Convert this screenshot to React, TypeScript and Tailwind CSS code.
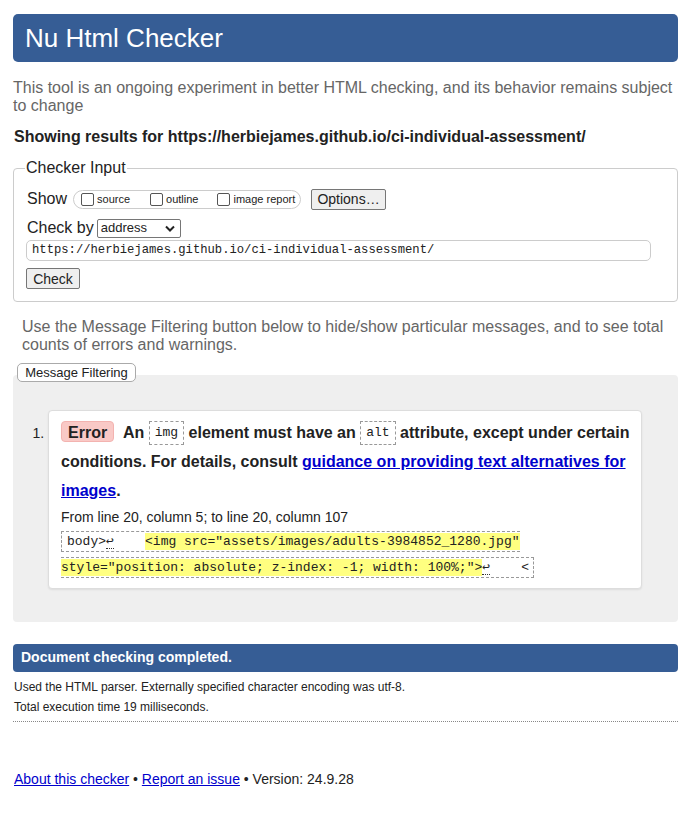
import React from "react";

const mono = "font-['Liberation_Mono','DejaVu_Sans_Mono',monospace]";

function Code({ children }: { children: React.ReactNode }) {
  return (
    <code
      className={`${mono} inline-block align-middle text-[13px] leading-[22px] px-[5px] border border-dashed border-[#999] font-normal text-[#222]`}
    >
      {children}
    </code>
  );
}

function Ret() {
  return <b className="font-normal border-b border-dotted border-[#333] font-['DejaVu_Sans_Mono',monospace] text-[13px]">↩</b>;
}

export default function App() {
  return (
    <div className="min-h-screen bg-white px-[13px] pt-[14px] font-['Liberation_Sans',Arial,sans-serif] text-[#222]">
      {/* Header */}
      <h1 className="h-[48px] rounded-[5px] bg-[#365d95] pl-[12px] flex items-center text-white text-[26px] font-normal">
        Nu Html Checker
      </h1>

      <p className="mt-[17px] text-[16px] leading-[18px] text-[#666]">
        This tool is an ongoing experiment in better HTML checking, and its behavior remains subject to change
      </p>

      <p className="mt-[13px] text-[16px] leading-[18px] font-bold pl-px">
        Showing results for https://herbiejames.github.io/ci-individual-assessment/
      </p>

      {/* Checker input */}
      <fieldset className="mt-[13px] border border-[#ccc] rounded-[4px] px-[12px] pb-[10px] pt-[2px]">
        <legend className="px-[1px] text-[16px] leading-[18px] text-[#222] -ml-[1px]">Checker Input</legend>

        <div className="flex items-center h-[22px] mt-[9px]">
          <span className="text-[16px] mr-[6px] ml-[1px]">Show</span>
          <span className="flex items-center h-[19px] w-[228px] border border-[#ccc] rounded-full pl-[7px] text-[11px]">
            <span className="w-[13px] h-[13px] border border-[#555] rounded-[2px] mr-[3px]" />
            <span>source</span>
            <span className="w-[13px] h-[13px] border border-[#555] rounded-[2px] ml-[20px] mr-[3px]" />
            <span>outline</span>
            <span className="w-[13px] h-[13px] border border-[#555] rounded-[2px] ml-[19px] mr-[3px]" />
            <span>image report</span>
          </span>
          <button className="ml-[10px] h-[21px] w-[75px] border border-[#767676] rounded-[2px] bg-[#efefef] text-[14px] leading-none">
            Options…
          </button>
        </div>

        <div className="flex items-center h-[22px] mt-[7px]">
          <span className="text-[16px] mr-[3px] ml-[1px]">Check by</span>
          <span className="flex items-center justify-between h-[19px] w-[84px] border border-[#767676] rounded-[2px] pl-[3px] pr-[5px] text-[13px]">
            <span>address</span>
            <svg width="10" height="7" viewBox="0 0 10 7">
              <path d="M1 1.5 L5 5.5 L9 1.5" fill="none" stroke="#222" strokeWidth="2" />
            </svg>
          </span>
        </div>

        <div className={`mt-[1px] h-[21px] w-[625px] border border-[#ccc] rounded-[5px] flex items-center pl-[5px] ${mono} text-[12.2px]`}>
          https://herbiejames.github.io/ci-individual-assessment/
        </div>

        <button className="mt-[7px] h-[21px] w-[54px] border border-[#767676] rounded-[2px] bg-[#efefef] text-[14px] leading-none">
          Check
        </button>
      </fieldset>

      <p className="mt-[16px] pl-[9px] text-[16px] leading-[18px] text-[#666]">
        Use the Message Filtering button below to hide/show particular messages, and to see total counts of errors and warnings.
      </p>

      {/* Results */}
      <div className="relative mt-[9px] pt-[12px]">
        <button className="absolute left-[4px] top-0 z-10 h-[19px] w-[119px] border border-[#aaa] rounded-[5px] bg-white text-[13px] leading-none">
          Message Filtering
        </button>
        <div className="rounded-[4px] bg-[#efefef] pl-[35px] pr-[36px] pt-[35px] pb-[33px]">
          <ol className="list-decimal list-outside marker:text-[14px] marker:font-normal marker:text-[#222]">
            <li className="bg-white border border-[#ddd] rounded-[4px] shadow-[0_1px_2px_rgba(0,0,0,0.08)] pl-[12px] pr-[4px] pt-[7px] pb-[8px]">
              <p className="text-[16px] leading-[29px] font-bold">
                <span className="inline-block align-middle leading-[21px] h-[21px] rounded-[4px] bg-[#f9c9c6] border border-[#f3b3b0] px-[6px] mr-[5px] -mt-[3px]">
                  Error
                </span>{" "}
                An <Code>img</Code> element must have an <Code>alt</Code> attribute, except under certain conditions. For
                details, consult{" "}
                <a href="#" className="text-[#0000cc] underline">
                  guidance on providing text alternatives for images
                </a>
                .
              </p>
              <p className="mt-[3px] text-[14px] leading-[18px]">From line 20, column 5; to line 20, column 107</p>
              <p className={`${mono} text-[13px] leading-[25px] mt-[2px] whitespace-pre`}>
                <span className="border border-dashed border-[#999] py-[2px] pl-[5px] pr-[4px]">
                  body&gt;<Ret />{"    "}
                  <span className="bg-[#ffff80] py-[1px]">&lt;img src="assets/images/adults-3984852_1280.jpg"</span>
                  <br />
                  <span className="bg-[#ffff80] py-[1px]">style="position: absolute; z-index: -1; width: 100%;"&gt;</span>
                  <Ret />
                  {"    "}&lt;
                </span>
              </p>
            </li>
          </ol>
        </div>
      </div>

      {/* Summary */}
      <div className="mt-[22px] h-[28px] rounded-[4px] bg-[#365d95] flex items-center pl-[8px] text-white text-[14px] font-bold">
        Document checking completed.
      </div>
      <p className="mt-[5px] pl-px text-[12px] leading-[20px] text-[#222]">
        Used the HTML parser. Externally specified character encoding was utf-8.
      </p>
      <p className="pl-px text-[12px] leading-[20px] text-[#222]">Total execution time 19 milliseconds.</p>
      <hr className="mt-[4px] border-0 border-t border-dotted border-[#888]" />

      <p className="mt-[48px] pl-px text-[14px] leading-[18px] text-[#222]">
        <a href="#" className="text-[#0000cc] underline">About this checker</a> •{" "}
        <a href="#" className="text-[#0000cc] underline">Report an issue</a> • Version: 24.9.28
      </p>
    </div>
  );
}
